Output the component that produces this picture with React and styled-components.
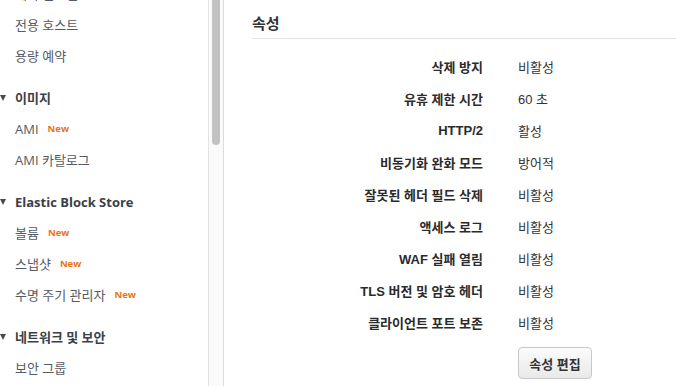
import React from "react";
import styled, { createGlobalStyle } from "styled-components";

const Global = createGlobalStyle`
  html, body { margin: 0; padding: 0; background: #fff; }
  body { font-family: "Noto Sans", "Noto Sans CJK KR", sans-serif; }
  #root { width: 676px; height: 386px; overflow: hidden; }
`;

const Page = styled.div`
  display: flex;
  width: 676px;
  height: 386px;
  overflow: hidden;
`;

const Sidebar = styled.nav`
  width: 208px;
  flex: none;
  overflow: hidden;
  font-family: "Open Sans", "Noto Sans CJK KR", sans-serif;
`;

const NavList = styled.div`
  margin-top: -22px;
  display: flex;
  flex-direction: column;
`;

const Section = styled.div`
  display: flex;
  flex-direction: column;
  margin-top: ${(p) => (p.$first ? 0 : 11)}px;
`;

const SectionHeader = styled.div`
  height: 31px;
  display: flex;
  align-items: center;
  gap: 9px;
  font-size: 13px;
  font-weight: 700;
  color: #3b4048;
`;

const Caret = styled.span`
  width: 0;
  height: 0;
  border-left: 3px solid transparent;
  border-right: 3px solid transparent;
  border-top: 6px solid #444b54;
`;

const NavItem = styled.div`
  height: 31px;
  display: flex;
  align-items: center;
  padding-left: 15px;
  font-size: 13px;
  color: #545b64;
`;

const NewBadge = styled.span`
  margin-left: 9px;
  font-size: 9.5px;
  font-weight: 700;
  color: #ec7211;
`;

const Track = styled.div`
  width: 14px;
  flex: none;
  background: #fafafa;
  border-left: 1px solid #e3e3e3;
  border-right: 1px solid #dcdcdc;
  display: flex;
  justify-content: center;
`;

const Thumb = styled.div`
  width: 8px;
  height: 145px;
  border-radius: 0 0 4px 4px;
  background: #c2c2c2;
`;

const Main = styled.main`
  flex: 1;
  padding-left: 28px;
  font-family: "Liberation Sans", "Noto Sans CJK KR", sans-serif;
  color: #222;
`;

const Heading = styled.h2`
  margin: 0;
  height: 39px;
  box-sizing: border-box;
  padding-top: 12px;
  font-size: 15px;
  font-weight: 700;
  color: #333;
  border-bottom: 1px solid #e2e2e2;
`;

const Table = styled.div`
  margin-top: 11px;
  display: grid;
  grid-template-columns: 231px auto;
  column-gap: 35px;
  grid-auto-rows: 32px;
  align-items: center;
`;

const Label = styled.div`
  text-align: right;
  font-size: 13px;
  font-weight: 700;
  color: #2b2b2b;
`;

const Value = styled.div`
  font-size: 13px;
  color: #333;
`;

const Actions = styled.div`
  margin-top: 9px;
  padding-left: 266px;
`;

const Button = styled.button`
  width: 74px;
  height: 32px;
  border: 1px solid #c8c8c8;
  border-radius: 4px;
  background: linear-gradient(#fbfbfb, #e9e9e9);
  font-family: "Liberation Sans", "Noto Sans CJK KR", sans-serif;
  font-size: 13px;
  font-weight: 700;
  color: #333;
  padding: 0;
`;

const nav = [
  { items: [{ t: "예약 인스턴스", n: true }, { t: "전용 호스트" }, { t: "용량 예약" }], first: true },
  { title: "이미지", items: [{ t: "AMI", n: true }, { t: "AMI 카탈로그" }] },
  {
    title: "Elastic Block Store",
    items: [{ t: "볼륨", n: true }, { t: "스냅샷", n: true }, { t: "수명 주기 관리자", n: true }],
  },
  { title: "네트워크 및 보안", items: [{ t: "보안 그룹" }] },
];

const rows = [
  ["삭제 방지", "비활성"],
  ["유휴 제한 시간", "60 초"],
  ["HTTP/2", "활성"],
  ["비동기화 완화 모드", "방어적"],
  ["잘못된 헤더 필드 삭제", "비활성"],
  ["액세스 로그", "비활성"],
  ["WAF 실패 열림", "비활성"],
  ["TLS 버전 및 암호 헤더", "비활성"],
  ["클라이언트 포트 보존", "비활성"],
];

export default function App() {
  return (
    <Page>
      <Global />
      <Sidebar>
        <NavList>
          {nav.map((s, i) => (
            <Section key={i} $first={s.first}>
              {s.title && (
                <SectionHeader>
                  <Caret />
                  {s.title}
                </SectionHeader>
              )}
              {s.items.map((it) => (
                <NavItem key={it.t}>
                  {it.t}
                  {it.n && <NewBadge>New</NewBadge>}
                </NavItem>
              ))}
            </Section>
          ))}
        </NavList>
      </Sidebar>
      <Track>
        <Thumb />
      </Track>
      <Main>
        <Heading>속성</Heading>
        <Table>
          {rows.map(([l, v]) => (
            <React.Fragment key={l}>
              <Label>{l}</Label>
              <Value>{v}</Value>
            </React.Fragment>
          ))}
        </Table>
        <Actions>
          <Button>속성 편집</Button>
        </Actions>
      </Main>
    </Page>
  );
}
